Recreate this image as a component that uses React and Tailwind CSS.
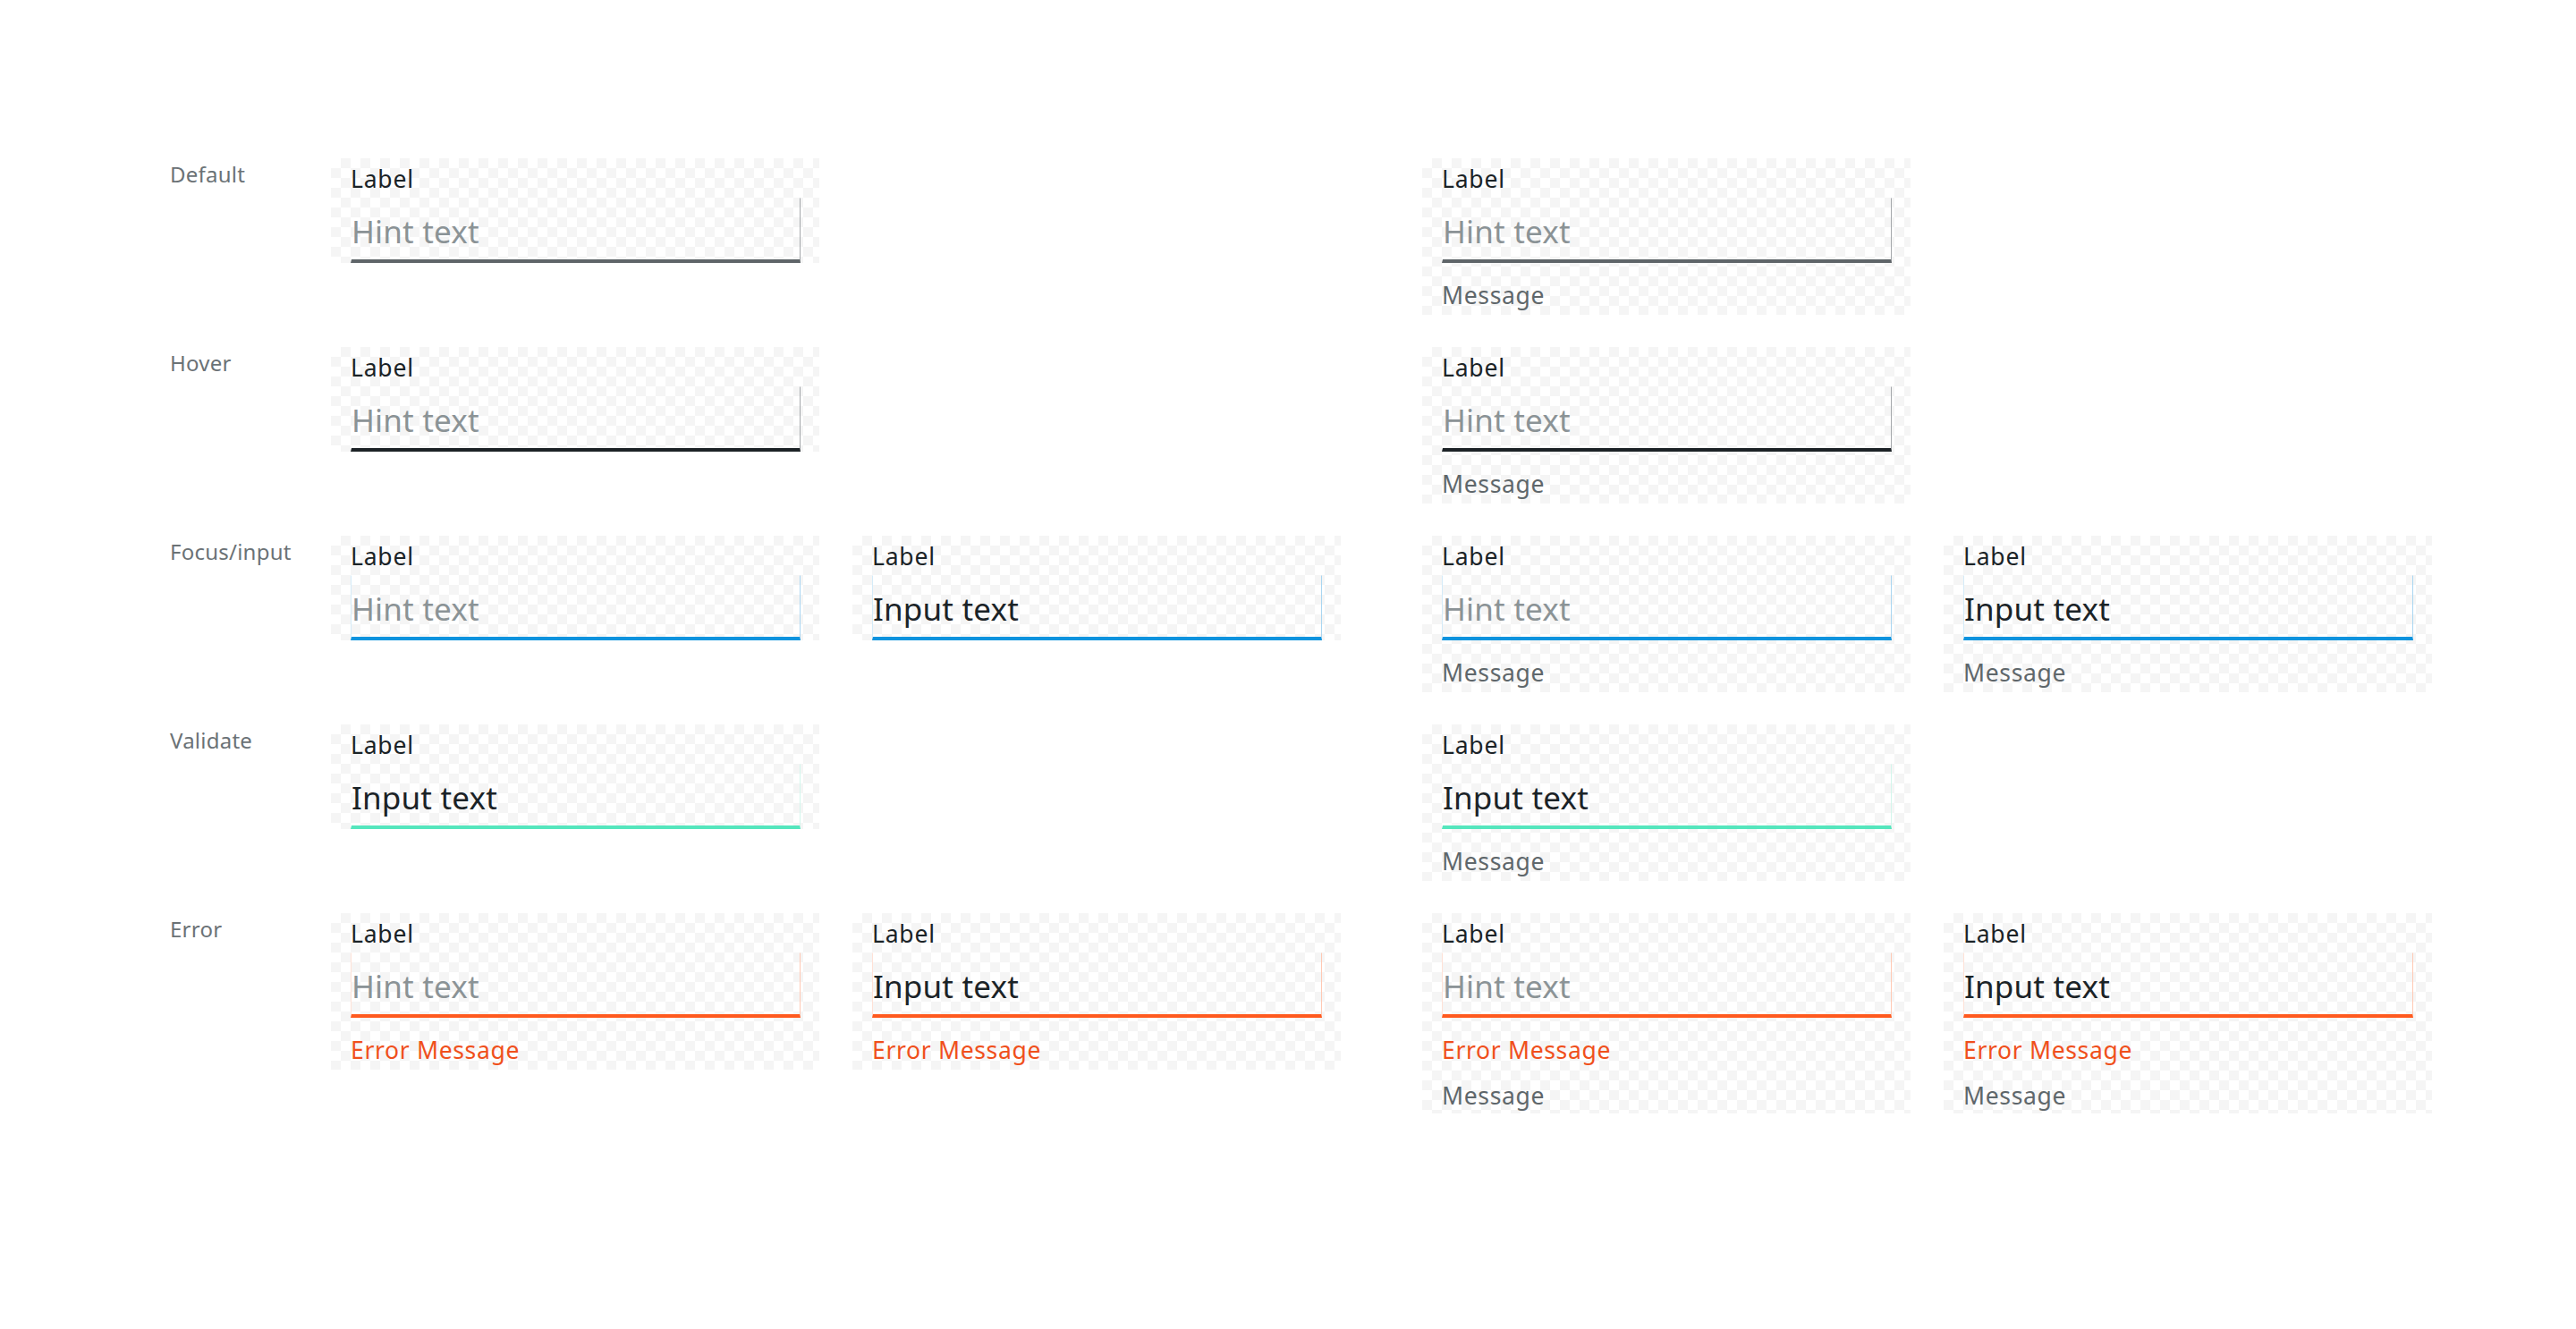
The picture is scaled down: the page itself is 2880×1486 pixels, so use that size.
const FONT = { fontFamily: '"Noto Sans", "Open Sans", sans-serif' };

const STATES = {
  default: { line: 'border-b-[#5f6569]', side: 'border-l-transparent border-t-transparent border-r-[#a4a8ab]' },
  hover: { line: 'border-b-[#1c2226]', side: 'border-l-transparent border-t-transparent border-r-[#a4a8ab]' },
  focus: { line: 'border-b-[#0c93de]', side: 'border-l-[#d4ebf8] border-t-transparent border-r-[#aad6f1]' },
  valid: { line: 'border-b-[#55e6bd]', side: 'border-l-transparent border-t-transparent border-r-[#d3f6ec]' },
  error: { line: 'border-b-[#ff5a1f]', side: 'border-l-[#ffe1d6] border-t-transparent border-r-[#ffc9b4]' },
};

function Field({ state, value, error, message }) {
  const s = STATES[state];
  const both = error && message;
  return (
    <div className="w-[546px] shrink-0 pl-[22px] pr-[21px] bg-[conic-gradient(#f5f5f5_25%,#ffffff_0_50%,#f5f5f5_0_75%,#ffffff_0)] bg-size-[22px_22px]">
      <div className="h-[44px] pt-[7px] text-[26.5px] leading-[32px] tracking-[0.03em] text-[#1b2327]">Label</div>
      <div className={`h-[73px] pt-[17px] border-l border-r border-t border-b-[4px] ${s.side} ${s.line}`}>
        <div className={`text-[35px] leading-[40px] tracking-[0.005em] ${value ? 'text-[#1b2327]' : 'text-[#8b9396]'}`}>
          {value ? 'Input text' : 'Hint text'}
        </div>
      </div>
      {(error || message) && (
        <div className={`flex flex-col gap-[19px] pt-[20px] text-[26.5px] leading-[32px] tracking-[0.025em] ${both ? 'pb-[4px]' : 'pb-[6px]'}`}>
          {error && <div className="text-[#f0501c]">Error Message</div>}
          {message && <div className="text-[#5f676b]">Message</div>}
        </div>
      )}
    </div>
  );
}

function Empty() {
  return <div className="w-[546px] shrink-0" />;
}

const rows = [
  {
    name: 'Default',
    cells: [
      <Field state="default" />,
      <Empty />,
      <Field state="default" message />,
      <Empty />,
    ],
  },
  {
    name: 'Hover',
    cells: [
      <Field state="hover" />,
      <Empty />,
      <Field state="hover" message />,
      <Empty />,
    ],
  },
  {
    name: 'Focus/input',
    cells: [
      <Field state="focus" />,
      <Field state="focus" value />,
      <Field state="focus" message />,
      <Field state="focus" value message />,
    ],
  },
  {
    name: 'Validate',
    cells: [
      <Field state="valid" value />,
      <Empty />,
      <Field state="valid" value message />,
      <Empty />,
    ],
  },
  {
    name: 'Error',
    cells: [
      <Field state="error" error />,
      <Field state="error" value error />,
      <Field state="error" error message />,
      <Field state="error" value error message />,
    ],
  },
];

export default function App() {
  return (
    <div className="min-h-[1486px] w-[2880px] bg-white pt-[177px] pl-[190px]" style={FONT}>
      <div className="flex flex-col gap-[36px]">
        {rows.map(row => (
          <div key={row.name} className="flex items-start">
            <div className="w-[180px] shrink-0 pt-[2px] text-[24px] leading-[32px] tracking-[0.01em] text-[#6b7276]">
              {row.name}
            </div>
            <div className="flex items-start">
              <div className="flex items-start gap-[37px]">
                {row.cells[0]}
                {row.cells[1]}
              </div>
              <div className="ml-[91px] flex items-start gap-[37px]">
                {row.cells[2]}
                {row.cells[3]}
              </div>
            </div>
          </div>
        ))}
      </div>
    </div>
  );
}
